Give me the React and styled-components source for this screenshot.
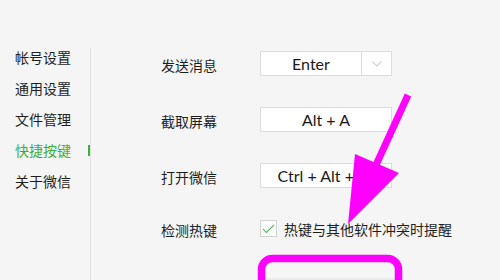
import React from "react";
import styled, { createGlobalStyle } from "styled-components";

const Global = createGlobalStyle`
  html, body { margin: 0; padding: 0; background: #f5f5f5; }
  body {
    width: 500px; height: 280px; overflow: hidden;
    font-family: "Noto Sans", "Noto Sans CJK SC", sans-serif;
    color: #1e1e1e;
  }
`;

const Page = styled.div`
  position: relative;
  display: flex;
  width: 500px;
  height: 280px;
  background: #f5f5f5;
  overflow: hidden;
`;

const Sidebar = styled.nav`
  position: relative;
  width: 91px;
  padding-top: 42px;
  box-sizing: border-box;
  display: flex;
  flex-direction: column;
  &::after {
    content: "";
    position: absolute;
    left: 90px;
    top: 48px;
    bottom: 0;
    width: 1px;
    background: #e2e2e2;
  }
`;

const NavItem = styled.div`
  position: relative;
  height: 31px;
  line-height: 31px;
  padding-left: 15px;
  font-family: "Noto Sans CJK SC", sans-serif;
  font-size: 14px;
  color: ${(p) => (p.$active ? "#3fae3c" : "#1e1e1e")};
  &::after {
    content: "";
    display: ${(p) => (p.$active ? "block" : "none")};
    position: absolute;
    right: 1px;
    top: 10px;
    width: 2px;
    height: 11px;
    background: #3fae3c;
    z-index: 1;
  }
`;

const Content = styled.main`
  display: flex;
  flex-direction: column;
  padding-left: 70px;
  padding-top: 51px;
`;

const Row = styled.div`
  display: flex;
  align-items: center;
  height: 25px;
  margin-bottom: ${(p) => p.$gap ?? 31}px;
`;

const Label = styled.div`
  width: 99px;
  font-family: "Noto Sans CJK SC", sans-serif;
  font-size: 14px;
  color: #1e1e1e;
  padding-top: 3px;
`;

const Field = styled.div`
  display: flex;
  width: 132px;
  height: 25px;
  box-sizing: border-box;
  border: 1px solid #dcdcdc;
  background: #fff;
`;

const FieldText = styled.div`
  flex: 1;
  display: flex;
  align-items: center;
  justify-content: center;
  font-family: "Lato", "Noto Sans", sans-serif;
  font-size: 16px;
  color: #1a1a1a;
  white-space: nowrap;
  overflow: hidden;
`;

const DropBtn = styled.div`
  width: 29px;
  border-left: 1px solid #dcdcdc;
  display: flex;
  align-items: center;
  justify-content: center;
`;

const CheckBox = styled.div`
  width: 17px;
  height: 17px;
  box-sizing: border-box;
  border: 1px solid #d2d2d2;
  background: #fff;
  display: flex;
  align-items: center;
  justify-content: center;
  margin-right: 7px;
`;

const CheckText = styled.div`
  font-family: "Noto Sans CJK SC", sans-serif;
  font-size: 14px;
  color: #1e1e1e;
  padding-top: 1px;
`;

const Overlay = styled.svg`
  position: absolute;
  left: 0;
  top: 0;
  pointer-events: none;
`;

export default function App() {
  return (
    <Page>
      <Global />
      <Sidebar>
        <NavItem>帐号设置</NavItem>
        <NavItem>通用设置</NavItem>
        <NavItem>文件管理</NavItem>
        <NavItem $active>快捷按键</NavItem>
        <NavItem>关于微信</NavItem>
      </Sidebar>
      <Content>
        <Row>
          <Label>发送消息</Label>
          <Field>
            <FieldText>Enter</FieldText>
            <DropBtn>
              <svg width="12" height="8" viewBox="0 0 12 8">
                <path d="M1.5 1.5 L6 6 L10.5 1.5" fill="none" stroke="#d2d2d2" strokeWidth="1.2" />
              </svg>
            </DropBtn>
          </Field>
        </Row>
        <Row>
          <Label>截取屏幕</Label>
          <Field>
            <FieldText>Alt + A</FieldText>
          </Field>
        </Row>
        <Row $gap={28}>
          <Label>打开微信</Label>
          <Field>
            <FieldText>Ctrl + Alt + W</FieldText>
          </Field>
        </Row>
        <Row>
          <Label>检测热键</Label>
          <CheckBox>
            <svg width="13" height="10" viewBox="0 0 13 10">
              <path d="M1 5 L4.5 8.5 L12 1" fill="none" stroke="#5cb85c" strokeWidth="1.1" />
            </svg>
          </CheckBox>
          <CheckText>热键与其他软件冲突时提醒</CheckText>
        </Row>
      </Content>
      <Overlay width="500" height="280" viewBox="0 0 500 280">
        <rect x="262" y="279" width="136" height="10" fill="none" stroke="#e0e0e0" strokeWidth="1" />
        <rect x="261.5" y="258.5" width="137" height="40" rx="11" fill="none" stroke="#ff00ff" strokeWidth="7.5" />
        <line x1="408" y1="95" x2="376" y2="165" stroke="#ff00ff" strokeWidth="7" />
        <polygon points="355,154 399,173 348,224" fill="#ff00ff" />
      </Overlay>
    </Page>
  );
}
